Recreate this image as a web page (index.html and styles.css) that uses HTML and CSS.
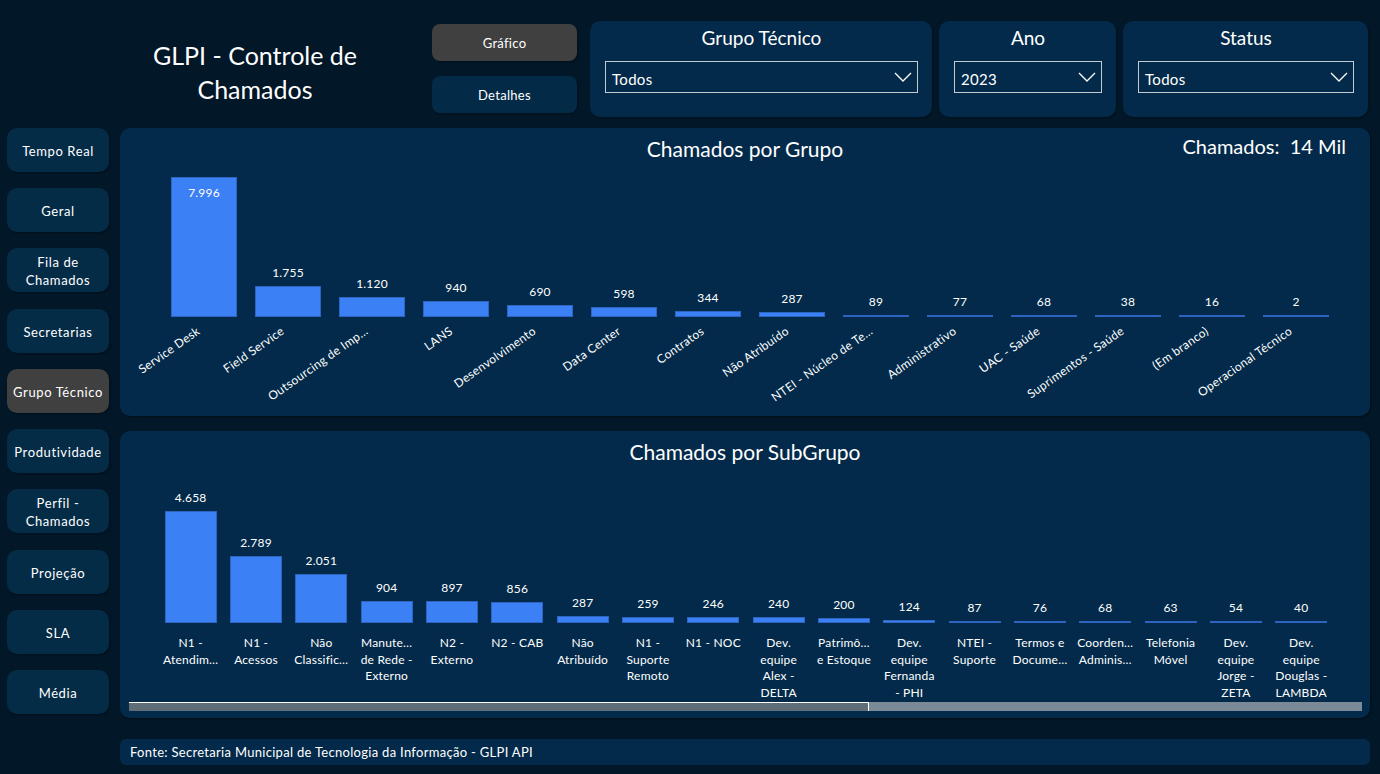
FILE: index.html
```html
<!DOCTYPE html>
<html lang="pt-BR">
<head>
<meta charset="utf-8">
<title>GLPI - Controle de Chamados</title>
<link rel="stylesheet" href="styles.css">
</head>
<body>
<div class="app">
  <header class="header">
    <h1 class="title">GLPI - Controle de<br>Chamados</h1>
    <div class="view-buttons">
      <button class="view-btn active">Gráfico</button>
      <button class="view-btn">Detalhes</button>
    </div>
    <div class="filters">
      <div class="filter filter-grupo">
        <div class="filter-title">Grupo Técnico</div>
        <div class="select"><span>Todos</span><svg class="chev" width="18" height="10" viewBox="0 0 18 10"><path d="M1 1 L9 9 L17 1" fill="none" stroke="#fff" stroke-width="1.3"/></svg></div>
      </div>
      <div class="filter filter-ano">
        <div class="filter-title">Ano</div>
        <div class="select"><span>2023</span><svg class="chev" width="18" height="10" viewBox="0 0 18 10"><path d="M1 1 L9 9 L17 1" fill="none" stroke="#fff" stroke-width="1.3"/></svg></div>
      </div>
      <div class="filter filter-status">
        <div class="filter-title">Status</div>
        <div class="select"><span>Todos</span><svg class="chev" width="18" height="10" viewBox="0 0 18 10"><path d="M1 1 L9 9 L17 1" fill="none" stroke="#fff" stroke-width="1.3"/></svg></div>
      </div>
    </div>
  </header>

  <div class="content">
    <nav class="sidebar">
      <a class="nav-btn">Tempo Real</a>
      <a class="nav-btn">Geral</a>
      <a class="nav-btn">Fila de<br>Chamados</a>
      <a class="nav-btn">Secretarias</a>
      <a class="nav-btn active">Grupo Técnico</a>
      <a class="nav-btn">Produtividade</a>
      <a class="nav-btn">Perfil -<br>Chamados</a>
      <a class="nav-btn">Projeção</a>
      <a class="nav-btn">SLA</a>
      <a class="nav-btn">Média</a>
    </nav>

    <main class="main">
      <section class="panel chart-top">
        <div class="chart-head">
          <span></span>
          <h2 class="chart-title">Chamados por Grupo</h2>
          <div class="kpi">Chamados:&nbsp; 14 Mil</div>
        </div>
        <div class="plot plot-top">
          <div class="col"><div class="bar" style="height:140px"><span class="value inside">7.996</span></div><span class="cat">Service Desk</span></div>
          <div class="col"><span class="value">1.755</span><div class="bar" style="height:30.7px"></div><span class="cat">Field Service</span></div>
          <div class="col"><span class="value">1.120</span><div class="bar" style="height:19.6px"></div><span class="cat">Outsourcing de Imp…</span></div>
          <div class="col"><span class="value">940</span><div class="bar" style="height:16.5px"></div><span class="cat">LANS</span></div>
          <div class="col"><span class="value">690</span><div class="bar" style="height:12.1px"></div><span class="cat">Desenvolvimento</span></div>
          <div class="col"><span class="value">598</span><div class="bar" style="height:10.5px"></div><span class="cat">Data Center</span></div>
          <div class="col"><span class="value">344</span><div class="bar" style="height:6px"></div><span class="cat">Contratos</span></div>
          <div class="col"><span class="value">287</span><div class="bar" style="height:5px"></div><span class="cat">Não Atribuído</span></div>
          <div class="col"><span class="value">89</span><div class="bar" style="height:2px"></div><span class="cat">NTEI - Núcleo de Te…</span></div>
          <div class="col"><span class="value">77</span><div class="bar" style="height:2px"></div><span class="cat">Administrativo</span></div>
          <div class="col"><span class="value">68</span><div class="bar" style="height:2px"></div><span class="cat">UAC - Saúde</span></div>
          <div class="col"><span class="value">38</span><div class="bar" style="height:2px"></div><span class="cat">Suprimentos - Saúde</span></div>
          <div class="col"><span class="value">16</span><div class="bar" style="height:2px"></div><span class="cat">(Em branco)</span></div>
          <div class="col"><span class="value">2</span><div class="bar" style="height:2px"></div><span class="cat">Operacional Técnico</span></div>
        </div>
      </section>

      <section class="panel chart-bottom">
        <div class="chart-head">
          <span></span>
          <h2 class="chart-title">Chamados por SubGrupo</h2>
          <span></span>
        </div>
        <div class="plot plot-bottom">
          <div class="col"><span class="value">4.658</span><div class="bar" style="height:112px"></div></div>
          <div class="col"><span class="value">2.789</span><div class="bar" style="height:67.1px"></div></div>
          <div class="col"><span class="value">2.051</span><div class="bar" style="height:49.3px"></div></div>
          <div class="col"><span class="value">904</span><div class="bar" style="height:21.7px"></div></div>
          <div class="col"><span class="value">897</span><div class="bar" style="height:21.6px"></div></div>
          <div class="col"><span class="value">856</span><div class="bar" style="height:20.6px"></div></div>
          <div class="col"><span class="value">287</span><div class="bar" style="height:6.9px"></div></div>
          <div class="col"><span class="value">259</span><div class="bar" style="height:6.2px"></div></div>
          <div class="col"><span class="value">246</span><div class="bar" style="height:5.9px"></div></div>
          <div class="col"><span class="value">240</span><div class="bar" style="height:5.8px"></div></div>
          <div class="col"><span class="value">200</span><div class="bar" style="height:4.8px"></div></div>
          <div class="col"><span class="value">124</span><div class="bar" style="height:3px"></div></div>
          <div class="col"><span class="value">87</span><div class="bar" style="height:2.1px"></div></div>
          <div class="col"><span class="value">76</span><div class="bar" style="height:2px"></div></div>
          <div class="col"><span class="value">68</span><div class="bar" style="height:2px"></div></div>
          <div class="col"><span class="value">63</span><div class="bar" style="height:2px"></div></div>
          <div class="col"><span class="value">54</span><div class="bar" style="height:2px"></div></div>
          <div class="col"><span class="value">40</span><div class="bar" style="height:2px"></div></div>
        </div>
        <div class="xlabels">
          <span>N1 -<br>Atendim…</span>
          <span>N1 -<br>Acessos</span>
          <span>Não<br>Classific…</span>
          <span>Manute…<br>de Rede -<br>Externo</span>
          <span>N2 -<br>Externo</span>
          <span>N2 - CAB</span>
          <span>Não<br>Atribuído</span>
          <span>N1 -<br>Suporte<br>Remoto</span>
          <span>N1 - NOC</span>
          <span>Dev.<br>equipe<br>Alex -<br>DELTA</span>
          <span>Patrimô…<br>e Estoque</span>
          <span>Dev.<br>equipe<br>Fernanda<br>- PHI</span>
          <span>NTEI -<br>Suporte</span>
          <span>Termos e<br>Docume…</span>
          <span>Coorden…<br>Adminis…</span>
          <span>Telefonia<br>Móvel</span>
          <span>Dev.<br>equipe<br>Jorge -<br>ZETA</span>
          <span>Dev.<br>equipe<br>Douglas -<br>LAMBDA</span>
        </div>
        <div class="scrollbar"><div class="thumb"></div></div>
      </section>

      <footer class="footer">Fonte: Secretaria Municipal de Tecnologia da Informação - GLPI API</footer>
    </main>
  </div>
</div>
</body>
</html>
```

FILE: styles.css
```css
* { box-sizing: border-box; }

html, body {
  margin: 0;
  padding: 0;
  background: #021727;
}

body {
  width: 1380px;
  height: 774px;
  overflow: hidden;
  font-family: "Lato", "Open Sans", sans-serif;
  color: #ffffff;
}

.app {
  width: 1380px;
  height: 774px;
}

/* ---------- header ---------- */
.header {
  height: 128px;
  display: flex;
  align-items: flex-start;
  padding-left: 120px;
}

.title {
  width: 270px;
  margin: 38px 0 0 0;
  font-size: 25px;
  line-height: 34px;
  font-weight: 400;
  text-align: center;
}

.view-buttons {
  margin: 24px 0 0 42px;
  width: 145px;
  display: flex;
  flex-direction: column;
  gap: 15px;
}

.view-btn {
  height: 37px;
  border: none;
  border-radius: 8px;
  background: #032b48;
  color: #ffffff;
  font-family: inherit;
  font-size: 13px;
  letter-spacing: 0.3px;
  padding-top: 2px;
  box-shadow: 1px 1px 2px rgba(0, 0, 0, 0.35);
}

.view-btn.active {
  background: #404040;
}

.filters {
  margin: 21px 0 0 13px;
  display: flex;
  gap: 7px;
}

.filter {
  height: 96px;
  background: #032a4a;
  border-radius: 10px;
  padding: 5px 14px 0 15px;
  box-shadow: 1px 1px 2px rgba(0, 0, 0, 0.35);
}

.filter-grupo { width: 342px; }
.filter-ano { width: 177px; }
.filter-status { width: 245px; }

.filter-title {
  font-size: 19px;
  line-height: 24px;
  text-align: center;
}

.select {
  margin-top: 11px;
  height: 32px;
  border: 1px solid #c3cbd3;
  display: flex;
  align-items: center;
  justify-content: space-between;
  padding: 3px 5px 0 6px;
  font-size: 15px;
  letter-spacing: 0.3px;
}

.chev { display: block; margin-top: -3px; }

/* ---------- content ---------- */
.content {
  display: flex;
  padding-left: 7px;
}

.sidebar {
  width: 102px;
  height: 586px;
  display: flex;
  flex-direction: column;
  justify-content: space-between;
}

.nav-btn {
  height: 44px;
  border-radius: 10px;
  background: #052c47;
  display: flex;
  align-items: center;
  justify-content: center;
  text-align: center;
  font-size: 13px;
  line-height: 18px;
  letter-spacing: 0.6px;
  padding-top: 2px;
  color: #ffffff;
  box-shadow: 1px 1px 2px rgba(0, 0, 0, 0.35);
}

.nav-btn.active {
  background: #404040;
}

.main {
  margin-left: 11px;
  width: 1250px;
  display: flex;
  flex-direction: column;
}

.panel {
  background: #032a4a;
  border-radius: 10px;
  box-shadow: 1px 1px 2px rgba(0, 0, 0, 0.4);
}

.chart-top { height: 288px; }
.chart-bottom { height: 287px; margin-top: 15px; }

.chart-head {
  margin-top: 7px;
  height: 28px;
  display: grid;
  grid-template-columns: 1fr auto 1fr;
}

.chart-title {
  margin: 0;
  font-size: 21px;
  line-height: 28px;
  font-weight: 400;
}

.kpi {
  justify-self: end;
  padding-right: 24px;
  margin-top: -3px;
  font-size: 20px;
  line-height: 28px;
}

/* ---------- plots ---------- */
.plot {
  display: flex;
  align-items: flex-end;
}

.plot-top {
  height: 154px;
  padding-left: 42px;
}

.plot-bottom {
  height: 157px;
  padding-left: 38px;
}

.col {
  position: relative;
  display: flex;
  flex-direction: column;
  align-items: center;
}

.plot-top .col { width: 84px; }
.plot-bottom .col { width: 65.33px; }

.bar {
  background: #3b80f5;
  border: 1px solid #2c64c0;
  min-height: 2px;
}

.plot-top .bar { width: 66px; }
.plot-bottom .bar { width: 52px; }

.value {
  font-size: 12px;
  line-height: 14px;
  margin-bottom: 6px;
  letter-spacing: 0.2px;
}

.value.inside {
  display: block;
  text-align: center;
  margin: 8px 0 0 0;
}

.cat {
  position: absolute;
  top: calc(100% + 7px);
  right: calc(50% + 9px);
  transform-origin: right top;
  transform: rotate(-35deg);
  white-space: nowrap;
  font-size: 12px;
  line-height: 14px;
  letter-spacing: 0.3px;
}

.xlabels {
  display: flex;
  padding-left: 38px;
  margin-top: 12px;
  height: 67px;
}

.xlabels span {
  width: 65.33px;
  text-align: center;
  font-size: 12px;
  line-height: 16.7px;
  white-space: nowrap;
  letter-spacing: 0.2px;
}

.scrollbar {
  margin: 0 8px 0 9px;
  height: 9px;
  background: #7b8a97;
}

.thumb {
  width: 740px;
  height: 9px;
  background: #5f6d78;
  border-top: 1px solid #ffffff;
  border-right: 1px solid #ffffff;
}

/* ---------- footer ---------- */
.footer {
  margin-top: 21px;
  height: 26px;
  line-height: 27px;
  padding-left: 10px;
  background: #032a4a;
  border-radius: 6px;
  font-size: 13px;
  letter-spacing: 0.3px;
}
```
